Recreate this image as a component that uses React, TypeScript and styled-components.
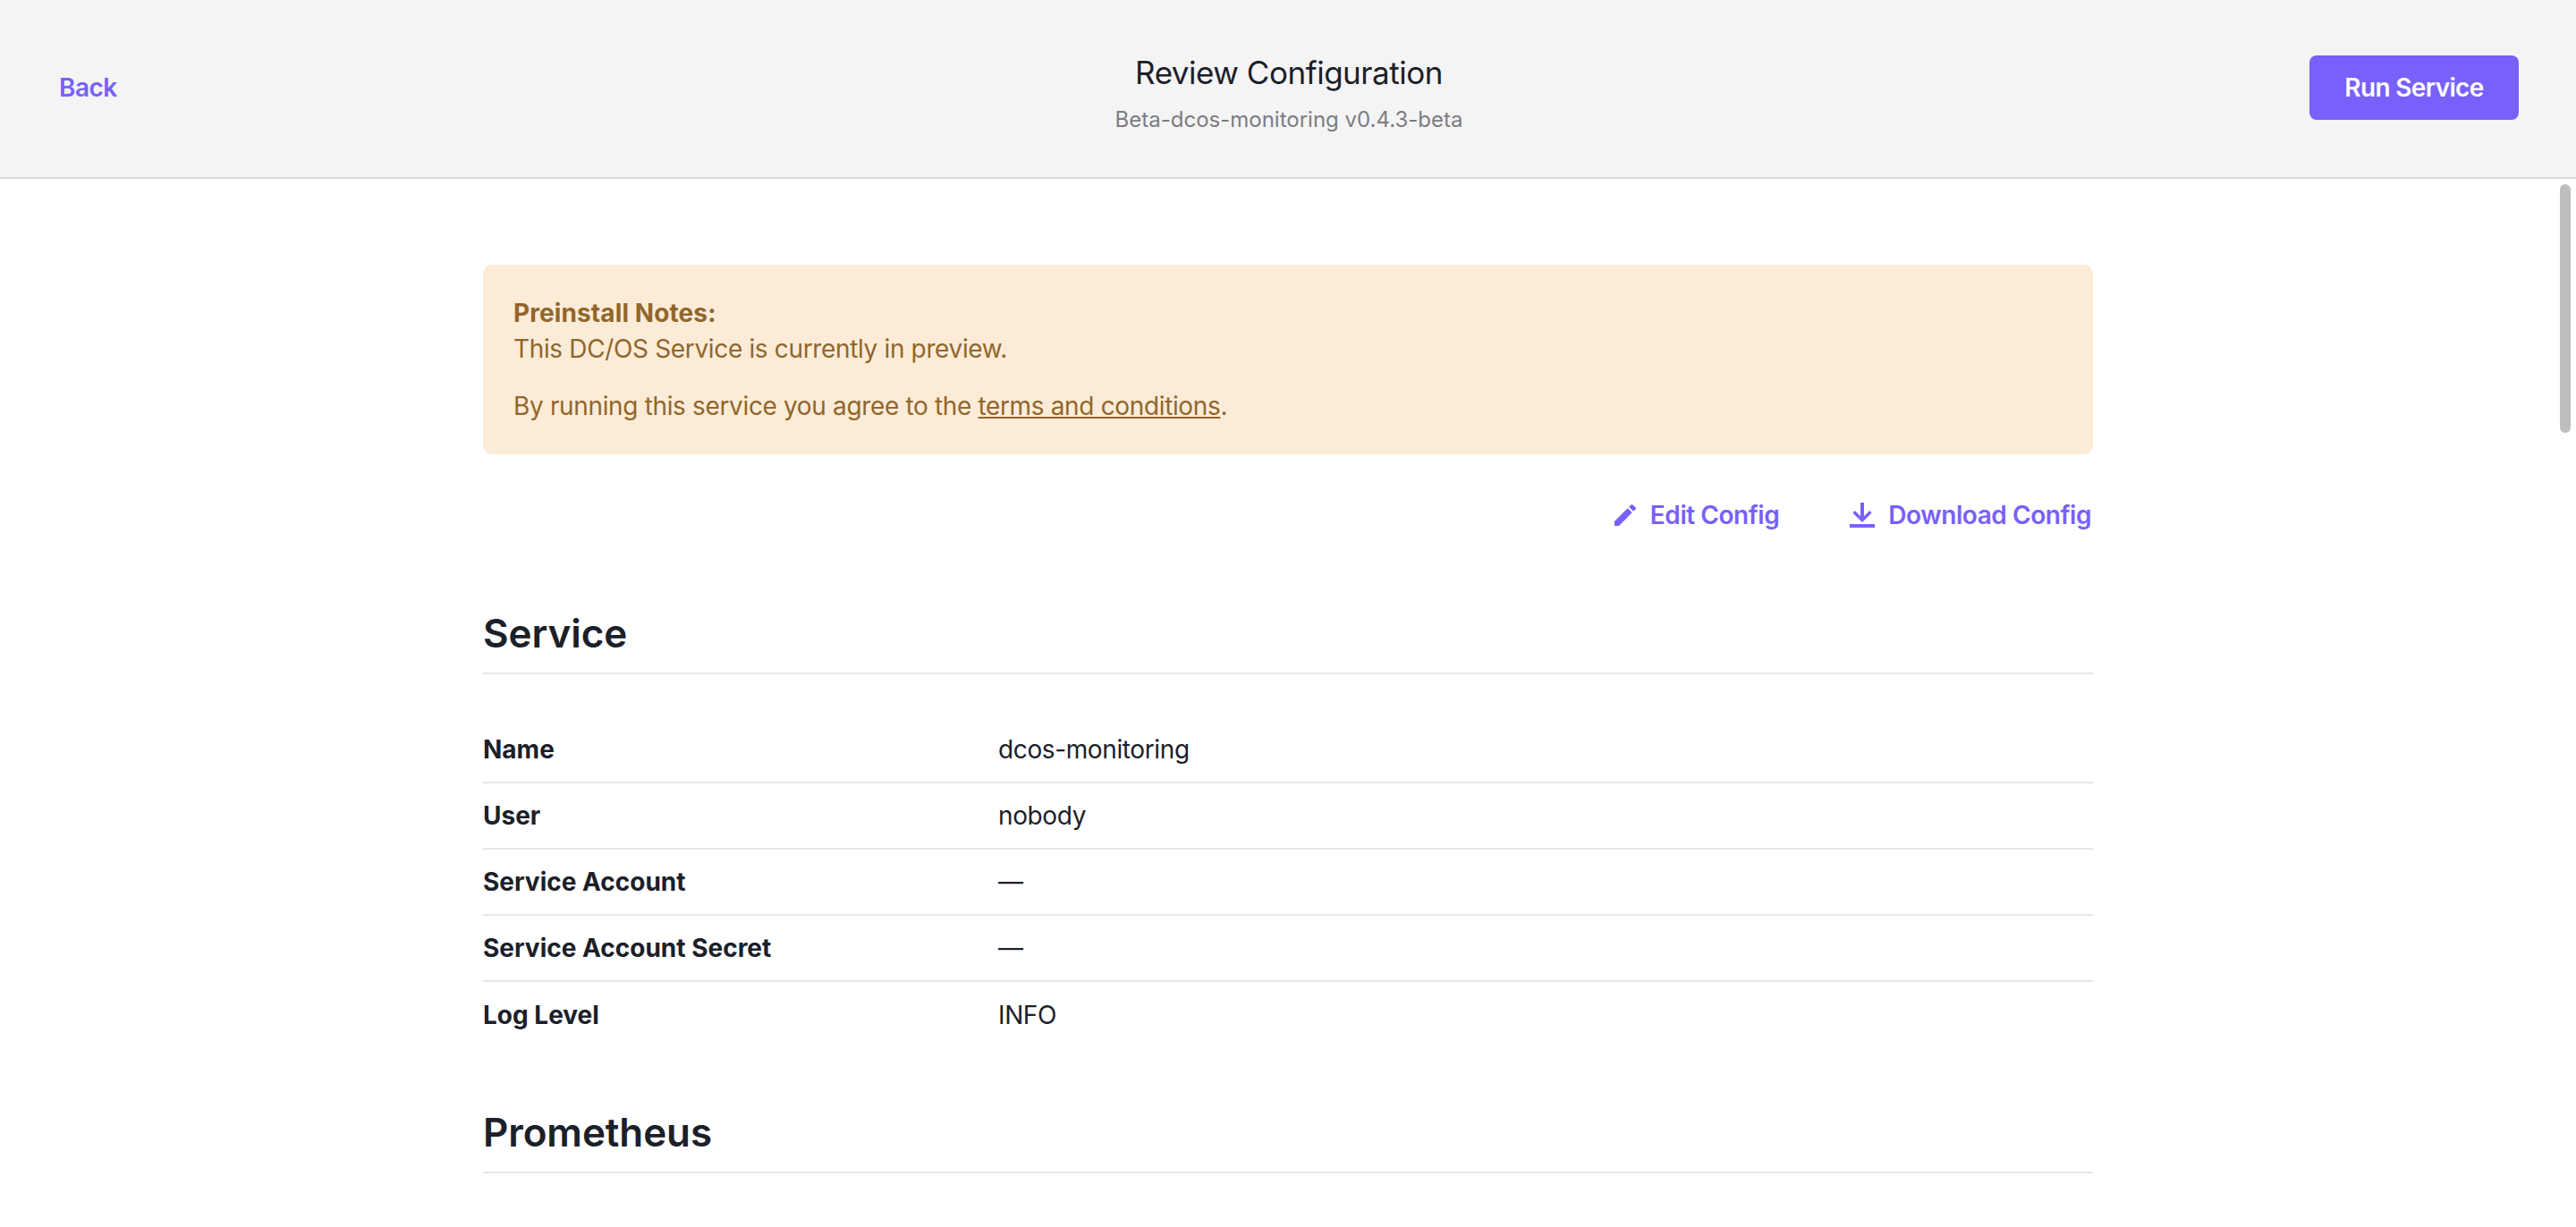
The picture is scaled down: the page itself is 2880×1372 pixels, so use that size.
import React from "react";
import styled, { createGlobalStyle } from "styled-components";

const Global = createGlobalStyle`
  html, body { margin: 0; padding: 0; height: 100%; overflow: hidden; background: #fff; }
  body { font-family: Inter, "Liberation Sans", sans-serif; color: #1b2029; }
  #root { height: 100%; }
  * { box-sizing: border-box; }
`;

const Page = styled.div`
  position: relative;
  display: flex;
  flex-direction: column;
  height: 1372px;
  overflow: hidden;
`;

const Header = styled.header`
  flex: none;
  display: grid;
  grid-template-columns: 1fr auto 1fr;
  align-items: center;
  height: 200px;
  padding: 0 64px 2px 66px;
  background: #f4f4f4;
  border-bottom: 2px solid #dcdcdc;
`;

const BackLink = styled.a`
  justify-self: start;
  color: #7860fa;
  font-size: 28px;
  font-weight: 600;
  letter-spacing: -0.5px;
  line-height: 36px;
`;

const TitleBlock = styled.div`
  display: flex;
  flex-direction: column;
  align-items: center;
  padding-top: 12px;
`;

const Title = styled.h1`
  margin: 0;
  font-size: 35px;
  font-weight: 400;
  letter-spacing: -0.48px;
  line-height: 44px;
  color: #1b2029;
`;

const Subtitle = styled.div`
  margin-top: 16px;
  font-size: 24px;
  line-height: 30px;
  color: #7b7c83;
`;

const RunButton = styled.button`
  justify-self: end;
  width: 234px;
  height: 72px;
  border: 0;
  border-radius: 8px;
  background: #7860fa;
  color: #fff;
  font-family: inherit;
  font-size: 28px;
  font-weight: 600;
  letter-spacing: -0.65px;
`;

const Scrollbar = styled.div`
  position: absolute;
  top: 206px;
  right: 6px;
  width: 12px;
  height: 278px;
  border-radius: 6px;
  background: #bebebf;
`;

const Main = styled.main`
  flex: 1;
  width: 1800px;
  margin: 0 auto;
  padding-top: 96px;
  overflow: hidden;
`;

const Alert = styled.div`
  height: 212px;
  padding: 34px 34px;
  border-radius: 10px;
  background: #fcecd7;
  color: #91662c;
  font-size: 28px;
  letter-spacing: -0.35px;
  line-height: 40px;
`;

const AlertTitle = styled.div`
  font-weight: 700;
  letter-spacing: 0.1px;
`;

const AlertText = styled.p`
  margin: 0 0 24px;
  &:last-child { margin-bottom: 0; }
`;

const AlertLink = styled.a`
  color: inherit;
  text-decoration: underline;
`;

const Actions = styled.div`
  display: flex;
  justify-content: flex-end;
  gap: 79px;
  height: 36px;
  margin-top: 50px;
  padding-right: 2px;
`;

const ActionLink = styled.a<{ $gap: number }>`
  display: flex;
  align-items: center;
  gap: ${(p) => p.$gap}px;
  color: #7860fa;
  font-size: 28px;
  font-weight: 600;
  letter-spacing: -0.45px;
  line-height: 36px;
`;

const Section = styled.section`
  margin-bottom: 64px;
`;

const SectionTitle = styled.h2<{ $first?: boolean }>`
  margin: ${(p) => (p.$first ? "84px" : "0")} 0 0;
  padding-bottom: 14px;
  border-bottom: 2px solid #e8e8e8;
  font-size: 44px;
  font-weight: 600;
  letter-spacing: -0.1px;
  line-height: 60px;
  color: #1b2029;
`;

const Rows = styled.dl`
  margin: 48px 0 0;
`;

const Row = styled.div`
  display: grid;
  grid-template-columns: 576px 1fr;
  align-items: center;
  height: 74px;
  border-bottom: 2px solid #e8e8e8;
  font-size: 28px;
  &:last-child { border-bottom: 0; }
`;

const Label = styled.dt`
  font-weight: 700;
`;

const Value = styled.dd`
  margin: 0;
  font-weight: 400;
  letter-spacing: -0.38px;
`;

const rows: [string, string][] = [
  ["Name", "dcos-monitoring"],
  ["User", "nobody"],
  ["Service Account", "—"],
  ["Service Account Secret", "—"],
  ["Log Level", "INFO"],
];

const PencilIcon = () => (
  <svg width="32" height="32" viewBox="0 0 24 24" fill="currentColor">
    <path d="M3 17.25V21h3.75L17.81 9.94l-3.75-3.75L3 17.25zM20.71 7.04a1 1 0 0 0 0-1.41l-2.34-2.34a1 1 0 0 0-1.41 0l-1.83 1.83 3.75 3.75 1.83-1.83z" />
  </svg>
);

const DownloadIcon = () => (
  <svg width="28" height="28" viewBox="0 0 28 28" fill="currentColor">
    <path d="M12 0h4v15.2l6.1-6.1 2.5 2.5L14 22 3.4 11.6l2.5-2.5 6.1 6.1zM0 24h28v4H0z" />
  </svg>
);

export default function App() {
  return (
    <Page>
      <Global />
      <Header>
        <BackLink>Back</BackLink>
        <TitleBlock>
          <Title>Review Configuration</Title>
          <Subtitle>Beta-dcos-monitoring v0.4.3-beta</Subtitle>
        </TitleBlock>
        <RunButton>Run Service</RunButton>
      </Header>
      <Scrollbar />
      <Main>
        <Alert>
          <AlertTitle>Preinstall Notes:</AlertTitle>
          <AlertText>This DC/OS Service is currently in preview.</AlertText>
          <AlertText>
            By running this service you agree to the <AlertLink>terms and conditions</AlertLink>.
          </AlertText>
        </Alert>
        <Actions>
          <ActionLink $gap={12}><PencilIcon />Edit Config</ActionLink>
          <ActionLink $gap={15}><DownloadIcon />Download Config</ActionLink>
        </Actions>
        <Section>
          <SectionTitle $first>Service</SectionTitle>
          <Rows>
            {rows.map(([k, v]) => (
              <Row key={k}>
                <Label>{k}</Label>
                <Value>{v}</Value>
              </Row>
            ))}
          </Rows>
        </Section>
        <Section>
          <SectionTitle>Prometheus</SectionTitle>
        </Section>
      </Main>
    </Page>
  );
}
